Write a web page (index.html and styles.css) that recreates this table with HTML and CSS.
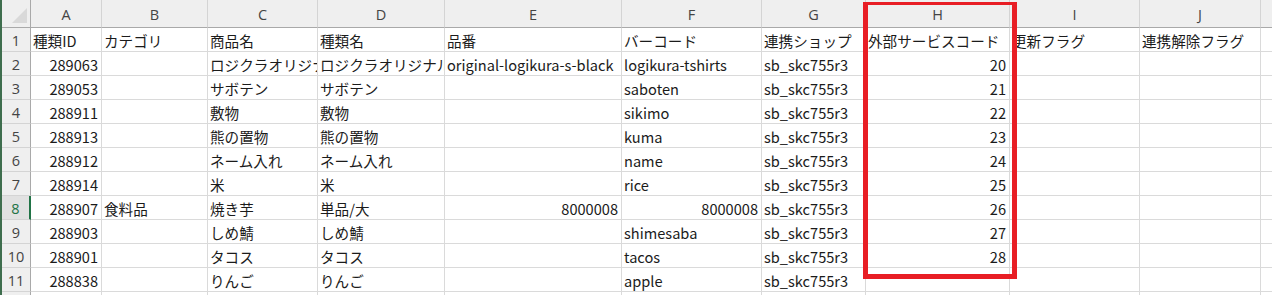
FILE: index.html
```html
<!DOCTYPE html>
<html lang="ja">
<head>
<meta charset="utf-8">
<title>Sheet</title>
<link rel="stylesheet" href="styles.css">
</head>
<body>
<div class="wrap">
  <div class="sheet">
    <div class="corner"><svg width="31" height="28" viewBox="0 0 31 28"><polygon points="12,23 27,23 27,8" fill="#d9d9d9"/></svg></div>
    <div class="ch">A</div><div class="ch">B</div><div class="ch">C</div><div class="ch">D</div><div class="ch">E</div><div class="ch">F</div><div class="ch">G</div><div class="ch">H</div><div class="ch">I</div><div class="ch">J</div><div class="ch"></div>

    <div class="rh">1</div><div class="c">種類ID</div><div class="c">カテゴリ</div><div class="c">商品名</div><div class="c">種類名</div><div class="c">品番</div><div class="c">バーコード</div><div class="c">連携ショップ</div><div class="c">外部サービスコード</div><div class="c">更新フラグ</div><div class="c">連携解除フラグ</div><div class="c"></div>

    <div class="rh">2</div><div class="c n">289063</div><div class="c"></div><div class="c">ロジクラオリジナルTシャツ</div><div class="c">ロジクラオリジナルTシャツ</div><div class="c">original-logikura-s-black</div><div class="c">logikura-tshirts</div><div class="c">sb_skc755r3</div><div class="c n">20</div><div class="c"></div><div class="c"></div><div class="c"></div>

    <div class="rh">3</div><div class="c n">289053</div><div class="c"></div><div class="c">サボテン</div><div class="c">サボテン</div><div class="c"></div><div class="c">saboten</div><div class="c">sb_skc755r3</div><div class="c n">21</div><div class="c"></div><div class="c"></div><div class="c"></div>

    <div class="rh">4</div><div class="c n">288911</div><div class="c"></div><div class="c">敷物</div><div class="c">敷物</div><div class="c"></div><div class="c">sikimo</div><div class="c">sb_skc755r3</div><div class="c n">22</div><div class="c"></div><div class="c"></div><div class="c"></div>

    <div class="rh">5</div><div class="c n">288913</div><div class="c"></div><div class="c">熊の置物</div><div class="c">熊の置物</div><div class="c"></div><div class="c">kuma</div><div class="c">sb_skc755r3</div><div class="c n">23</div><div class="c"></div><div class="c"></div><div class="c"></div>

    <div class="rh">6</div><div class="c n">288912</div><div class="c"></div><div class="c">ネーム入れ</div><div class="c">ネーム入れ</div><div class="c"></div><div class="c">name</div><div class="c">sb_skc755r3</div><div class="c n">24</div><div class="c"></div><div class="c"></div><div class="c"></div>

    <div class="rh">7</div><div class="c n">288914</div><div class="c"></div><div class="c">米</div><div class="c">米</div><div class="c"></div><div class="c">rice</div><div class="c">sb_skc755r3</div><div class="c n">25</div><div class="c"></div><div class="c"></div><div class="c"></div>

    <div class="rh sel">8</div><div class="c n">288907</div><div class="c">食料品</div><div class="c">焼き芋</div><div class="c">単品/大</div><div class="c n">8000008</div><div class="c n">8000008</div><div class="c">sb_skc755r3</div><div class="c n">26</div><div class="c"></div><div class="c"></div><div class="c"></div>

    <div class="rh">9</div><div class="c n">288903</div><div class="c"></div><div class="c">しめ鯖</div><div class="c">しめ鯖</div><div class="c"></div><div class="c">shimesaba</div><div class="c">sb_skc755r3</div><div class="c n">27</div><div class="c"></div><div class="c"></div><div class="c"></div>

    <div class="rh">10</div><div class="c n">288901</div><div class="c"></div><div class="c">タコス</div><div class="c">タコス</div><div class="c"></div><div class="c">tacos</div><div class="c">sb_skc755r3</div><div class="c n">28</div><div class="c"></div><div class="c"></div><div class="c"></div>

    <div class="rh">11</div><div class="c n">288838</div><div class="c"></div><div class="c">りんご</div><div class="c">りんご</div><div class="c"></div><div class="c">apple</div><div class="c">sb_skc755r3</div><div class="c n"></div><div class="c"></div><div class="c"></div><div class="c"></div>

    <div class="rh"></div><div class="c"></div><div class="c"></div><div class="c"></div><div class="c"></div><div class="c"></div><div class="c"></div><div class="c"></div><div class="c"></div><div class="c"></div><div class="c"></div><div class="c"></div>
  </div>
  <div class="highlight"></div>
</div>
</body>
</html>
```

FILE: styles.css
```css
html, body {
  margin: 0;
  padding: 0;
  background: #ffffff;
}

.wrap {
  position: relative;
  width: 1272px;
  height: 295px;
  overflow: hidden;
  border-left: 2px solid #3f6e4e;
  box-sizing: border-box;
}

.sheet {
  display: grid;
  grid-template-columns: 29px 71px 106px 110px 127px 177px 140px 104px 144px 130px 121px 40px;
  grid-template-rows: 28px repeat(11, 24px) 24px;
  font-family: "Noto Sans CJK JP", "Noto Sans", sans-serif;
  font-size: 14.6px;
  color: #1b1b1b;
}

.corner {
  background: #efefef;
  border-right: 1px solid #a9a9a9;
  border-bottom: 1px solid #a9a9a9;
  box-sizing: border-box;
  overflow: hidden;
}

.corner svg {
  display: block;
  margin-left: -2px;
}

.ch {
  background: #efefef;
  border-right: 1px solid #d4d4d4;
  border-bottom: 1px solid #a9a9a9;
  box-sizing: border-box;
  display: flex;
  align-items: center;
  justify-content: center;
  font-family: "Open Sans", "Noto Sans", sans-serif;
  font-size: 14.5px;
  color: #444444;
  padding-top: 1px;
}

.rh {
  background: #efefef;
  border-right: 1px solid #a9a9a9;
  border-bottom: 1px solid #d4d4d4;
  box-sizing: border-box;
  display: flex;
  align-items: center;
  justify-content: center;
  font-family: "Open Sans", "Noto Sans", sans-serif;
  font-size: 14.5px;
  color: #444444;
  padding-top: 1px;
}

.rh.sel {
  background: #e1e1e1;
  color: #217346;
  border-right: 2px solid #217346;
}

.c {
  border-right: 1px solid #dadada;
  border-bottom: 1px solid #dadada;
  box-sizing: border-box;
  display: flex;
  align-items: center;
  padding: 2px 2px 0 2px;
  white-space: nowrap;
  overflow: hidden;
  min-width: 0;
}

.c.n {
  justify-content: flex-end;
  padding-right: 3px;
}

.highlight {
  position: absolute;
  left: 861px;
  top: 2px;
  width: 154px;
  height: 277px;
  border: 5px solid #e81e25;
  border-top-width: 3px;
  box-sizing: border-box;
  pointer-events: none;
}
```
